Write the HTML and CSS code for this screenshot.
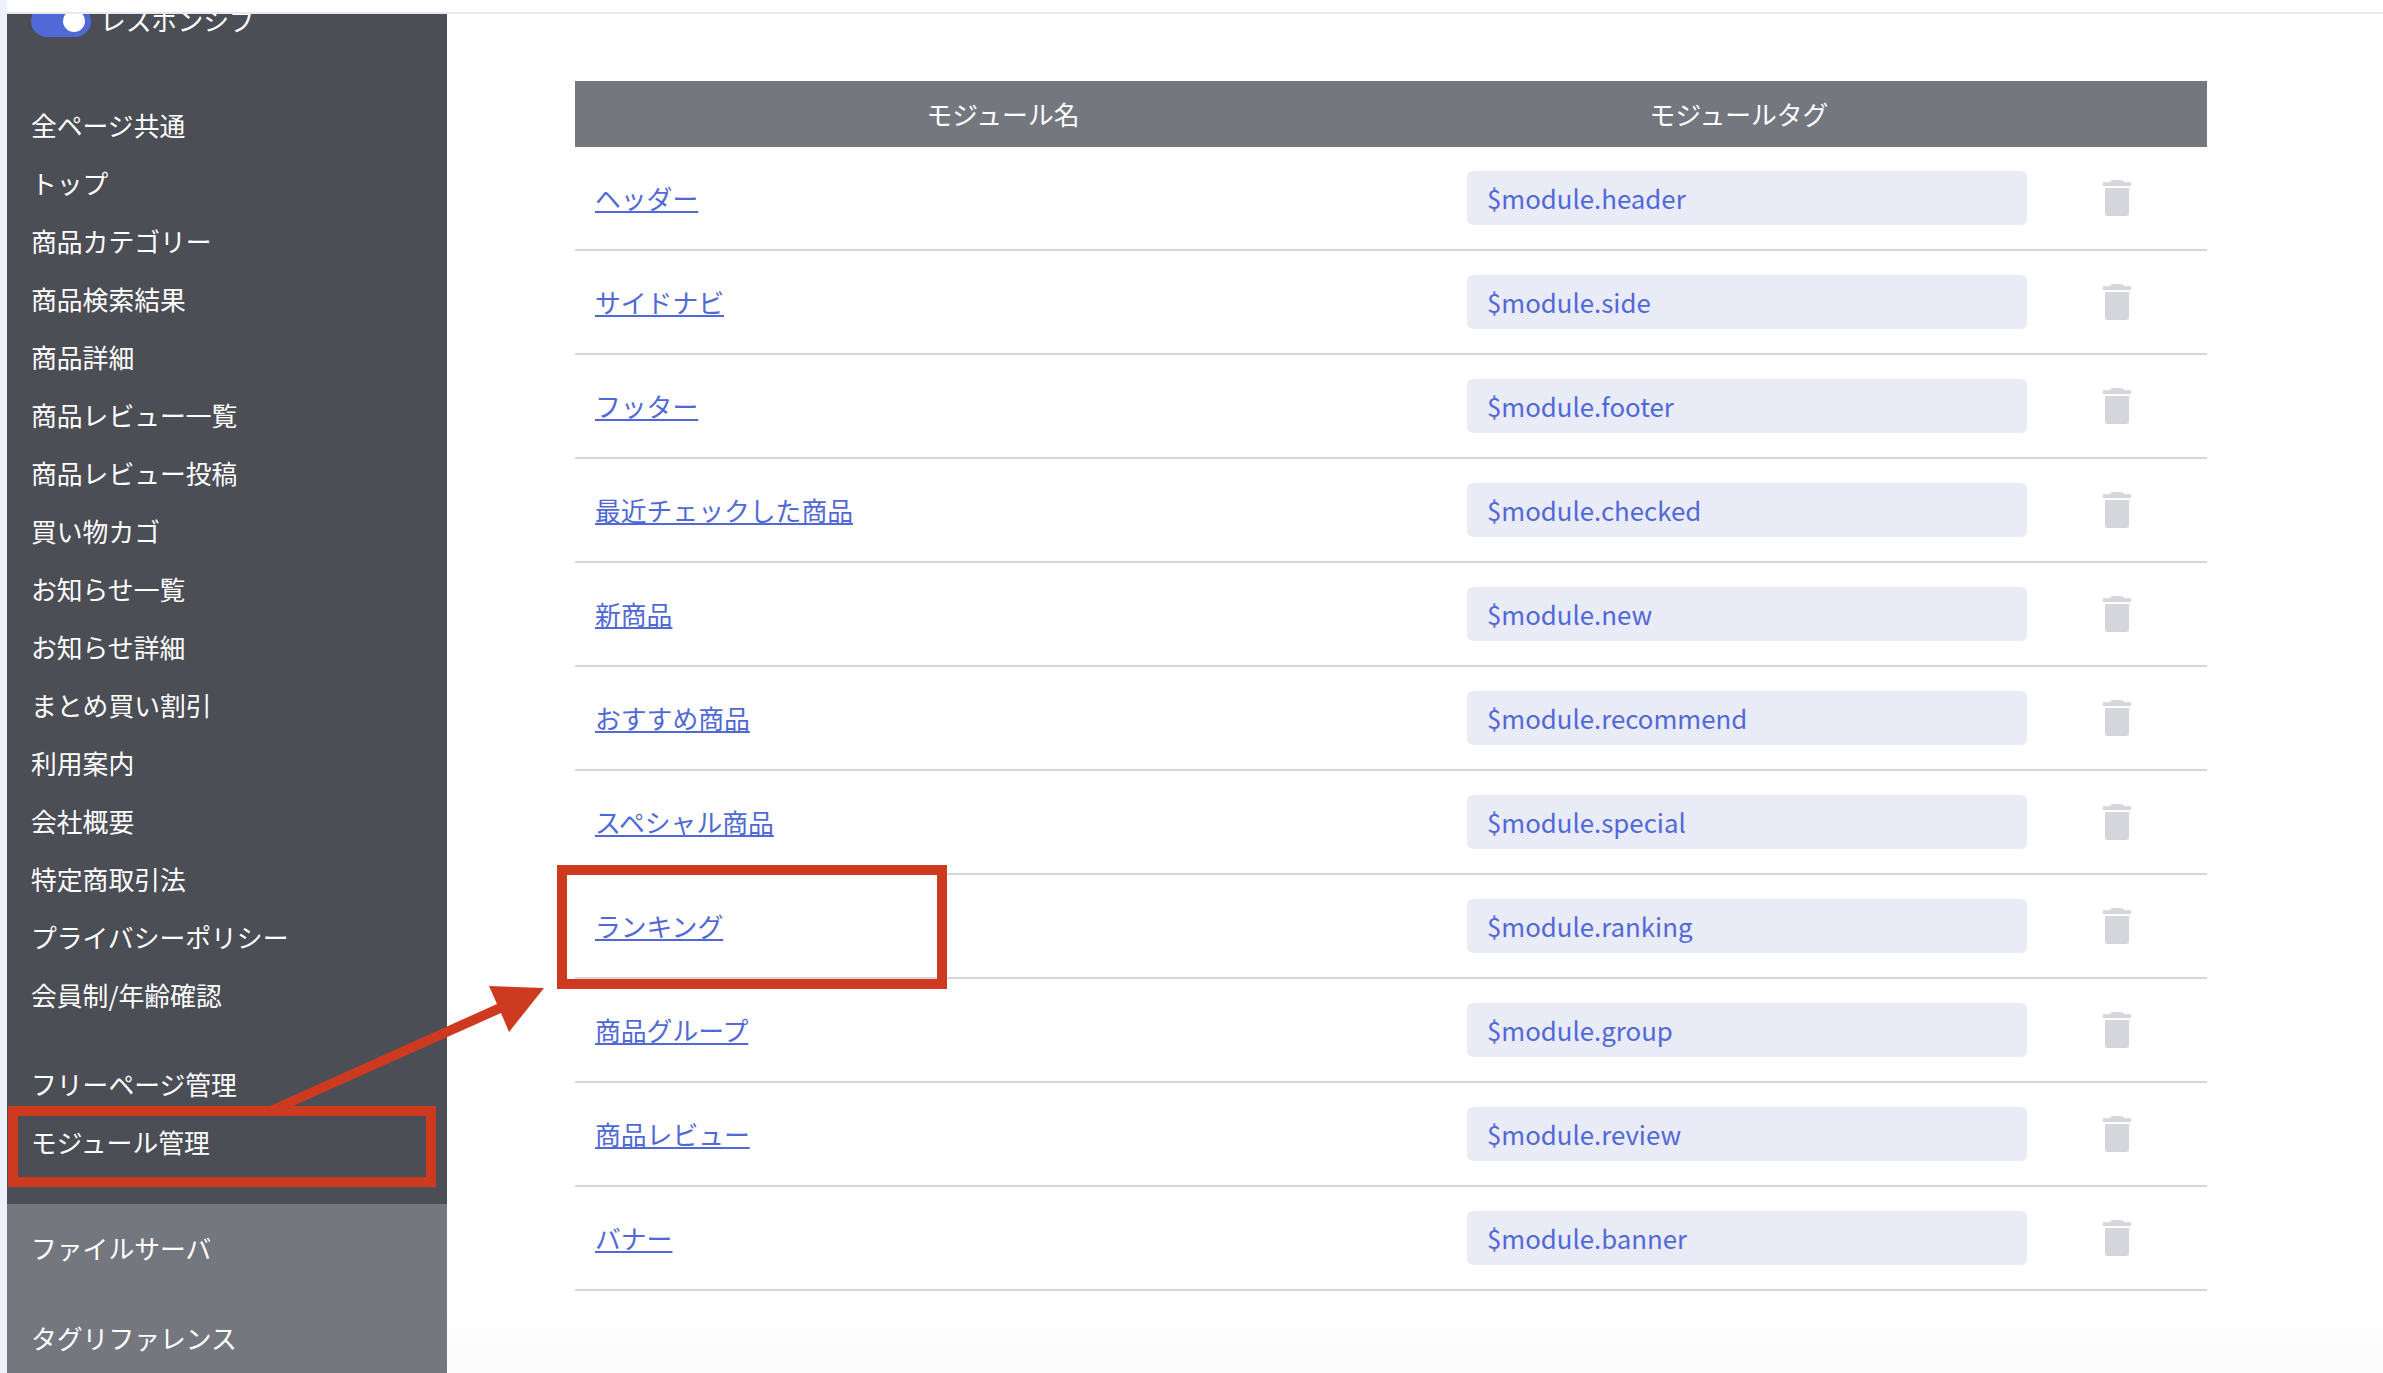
FILE: index.html
```html
<!DOCTYPE html>
<html lang="ja">
<head>
<meta charset="utf-8">
<title>モジュール管理</title>
<link rel="stylesheet" href="styles.css">
</head>
<body>
<svg width="0" height="0" class="defs"><defs>
<symbol id="trash" viewBox="0 0 28 36"><path d="M7 2.2Q7.600 0 10 0H18Q20.400 0 21 2.200H28V6H0V2.200ZM2 8H26V33Q26 36 23 36H5Q2 36 2 33Z"/></symbol>
</defs></svg>
<div class="strip"></div>
<div class="app">
  <div class="topbar"></div>
  <div class="body-row">
    <aside class="sidebar">
      <div class="sidebar-dark">
        <div class="toggle-row">
          <span class="toggle"><span class="knob"></span></span>
          <span class="toggle-label">レスポンシブ</span>
        </div>
        <ul class="menu menu-pages">
          <li>全ページ共通</li>
          <li>トップ</li>
          <li>商品カテゴリー</li>
          <li>商品検索結果</li>
          <li>商品詳細</li>
          <li>商品レビュー一覧</li>
          <li>商品レビュー投稿</li>
          <li>買い物カゴ</li>
          <li>お知らせ一覧</li>
          <li>お知らせ詳細</li>
          <li>まとめ買い割引</li>
          <li>利用案内</li>
          <li>会社概要</li>
          <li>特定商取引法</li>
          <li>プライバシーポリシー</li>
          <li>会員制/年齢確認</li>
        </ul>
        <ul class="menu menu-manage">
          <li>フリーページ管理</li>
          <li>モジュール管理</li>
        </ul>
      </div>
      <div class="sidebar-grey">
        <div class="grey-item">ファイルサーバ</div>
        <div class="grey-item">タグリファレンス</div>
      </div>
    </aside>
    <main class="main">
      <div class="table">
        <div class="thead">
          <div>モジュール名</div>
          <div>モジュールタグ</div>
          <div></div>
        </div>
        <div class="row"><div class="name"><a href="#">ヘッダー</a></div><div class="tag"><div class="tag-field">$module.header</div></div><div class="del"><svg class="trash"><use href="#trash"/></svg></div></div>
        <div class="row"><div class="name"><a href="#">サイドナビ</a></div><div class="tag"><div class="tag-field">$module.side</div></div><div class="del"><svg class="trash"><use href="#trash"/></svg></div></div>
        <div class="row"><div class="name"><a href="#">フッター</a></div><div class="tag"><div class="tag-field">$module.footer</div></div><div class="del"><svg class="trash"><use href="#trash"/></svg></div></div>
        <div class="row"><div class="name"><a href="#">最近チェックした商品</a></div><div class="tag"><div class="tag-field">$module.checked</div></div><div class="del"><svg class="trash"><use href="#trash"/></svg></div></div>
        <div class="row"><div class="name"><a href="#">新商品</a></div><div class="tag"><div class="tag-field">$module.new</div></div><div class="del"><svg class="trash"><use href="#trash"/></svg></div></div>
        <div class="row"><div class="name"><a href="#">おすすめ商品</a></div><div class="tag"><div class="tag-field">$module.recommend</div></div><div class="del"><svg class="trash"><use href="#trash"/></svg></div></div>
        <div class="row"><div class="name"><a href="#">スペシャル商品</a></div><div class="tag"><div class="tag-field">$module.special</div></div><div class="del"><svg class="trash"><use href="#trash"/></svg></div></div>
        <div class="row"><div class="name"><a href="#">ランキング</a></div><div class="tag"><div class="tag-field">$module.ranking</div></div><div class="del"><svg class="trash"><use href="#trash"/></svg></div></div>
        <div class="row"><div class="name"><a href="#">商品グループ</a></div><div class="tag"><div class="tag-field">$module.group</div></div><div class="del"><svg class="trash"><use href="#trash"/></svg></div></div>
        <div class="row"><div class="name"><a href="#">商品レビュー</a></div><div class="tag"><div class="tag-field">$module.review</div></div><div class="del"><svg class="trash"><use href="#trash"/></svg></div></div>
        <div class="row"><div class="name"><a href="#">バナー</a></div><div class="tag"><div class="tag-field">$module.banner</div></div><div class="del"><svg class="trash"><use href="#trash"/></svg></div></div>
      </div>
    </main>
  </div>
</div>
<svg class="annotation" width="2383" height="1373" viewBox="0 0 2383 1373">
  <path class="ann-fill" d="M270 1106L497 1004L489 986L544 988L509 1032L501 1013L293 1106Z"/>
  <rect class="ann-box" x="13" y="1111" width="418" height="71"/>
  <rect class="ann-box" x="562" y="870" width="380" height="114"/>
</svg>
</body>
</html>
```
FILE: styles.css
```css
* { box-sizing: border-box; }
html, body { margin: 0; padding: 0; }
body {
  width: 2383px;
  height: 1373px;
  overflow: hidden;
  display: flex;
  background: #fff;
  font-family: "Noto Sans CJK JP", "Noto Sans", sans-serif;
  font-size: 25.8px;
  color: #fff;
  position: relative;
}
.defs { position: absolute; }
.strip { width: 7px; flex: none; background: #eef1fb; }
.app { flex: 1; display: flex; flex-direction: column; min-width: 0; }
.topbar { height: 14px; flex: none; background: #fff; border-bottom: 2px solid #e6e9ef; }
.body-row { flex: 1; display: flex; min-height: 0; }
.sidebar { width: 440px; flex: none; display: flex; flex-direction: column; }
.sidebar-dark { height: 1190px; flex: none; background: #4c4e56; }
.sidebar-grey { flex: 1; background: #75777f; padding-top: 16px; }
.toggle-row {
  height: 24px;
  overflow: hidden;
  display: flex;
  align-items: flex-end;
  padding: 0 0 1px 24px;
}
.toggle {
  width: 60px;
  height: 32px;
  border-radius: 16px;
  background: #5069d6;
  flex: none;
  display: flex;
  align-items: center;
  justify-content: flex-end;
  padding-right: 6px;
}
.knob { width: 22px; height: 22px; border-radius: 50%; background: #fff; }
.toggle-label { margin-left: 9px; line-height: 34px; }
.menu { list-style: none; margin: 0; padding: 0 0 0 24px; }
.menu li { height: 58px; line-height: 56px; white-space: nowrap; }
.menu-pages { margin-top: 59px; }
.menu-manage { margin-top: 31px; }
.grey-item { height: 58px; line-height: 56px; padding-left: 24px; margin-bottom: 32px; white-space: nowrap; }
.main {
  flex: 1;
  padding: 67px 0 0 128px;
  min-width: 0;
  background: linear-gradient(to bottom, #fff 1290px, #fbfbfb 100%);
}
.table { width: 1632px; }
.thead {
  display: grid;
  grid-template-columns: 856px 616px 160px;
  height: 66px;
  background: #75777f;
  align-items: center;
  text-align: center;
  padding-bottom: 2px;
}
.row {
  display: grid;
  grid-template-columns: 856px 616px 160px;
  height: 104px;
  align-items: center;
  border-bottom: 2px solid #d5d6dc;
  color: #5069d6;
}
.name { padding: 0 0 2px 20px; }
.name a { color: #5069d6; text-decoration: underline; }
.tag { padding: 0 20px 0 36px; }
.tag-field {
  height: 54px;
  line-height: 54px;
  padding-left: 20px;
  background: #e9ebf6;
  border-radius: 6px;
}
.del { padding-left: 56px; display: flex; align-items: center; }
.trash { width: 28px; height: 36px; fill: #d5d6dc; }
.annotation { position: absolute; left: 0; top: 0; pointer-events: none; }
.ann-fill { fill: #cd3a1f; }
.ann-box { fill: none; stroke: #cd3a1f; stroke-width: 10; }
```
